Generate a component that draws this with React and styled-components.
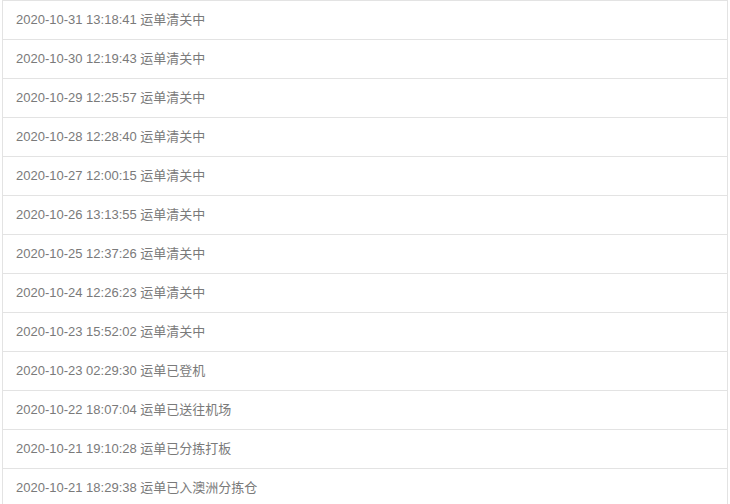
import React from 'react'
import styled, { createGlobalStyle } from 'styled-components'

const GlobalStyle = createGlobalStyle`
  body {
    margin: 0;
    background: #fff;
    font-family: "Liberation Sans", Arial, "Noto Sans CJK SC", sans-serif;
  }
`

const tracks = [
  ['2020-10-31 13:18:41', '运单清关中'],
  ['2020-10-30 12:19:43', '运单清关中'],
  ['2020-10-29 12:25:57', '运单清关中'],
  ['2020-10-28 12:28:40', '运单清关中'],
  ['2020-10-27 12:00:15', '运单清关中'],
  ['2020-10-26 13:13:55', '运单清关中'],
  ['2020-10-25 12:37:26', '运单清关中'],
  ['2020-10-24 12:26:23', '运单清关中'],
  ['2020-10-23 15:52:02', '运单清关中'],
  ['2020-10-23 02:29:30', '运单已登机'],
  ['2020-10-22 18:07:04', '运单已送往机场'],
  ['2020-10-21 19:10:28', '运单已分拣打板'],
  ['2020-10-21 18:29:38', '运单已入澳洲分拣仓'],
]

const App = () => {
  return (
    <>
      <GlobalStyle />
      <List>
        {tracks.map(([time, status]) => (
          <Item key={time + status}>
            {time} {status}
          </Item>
        ))}
      </List>
    </>
  )
}

const List = styled.ul`
  list-style: none;
  margin: 0 2px 0 2px;
  padding: 0;
  border-top: 1px solid #e3e3e3;
`

const Item = styled.li`
  height: 38px;
  line-height: 38px;
  padding: 0 13px;
  border: 1px solid #e3e3e3;
  border-top: none;
  font-size: 13px;
  color: #7a7a7a;
  white-space: nowrap;
`

export default App
